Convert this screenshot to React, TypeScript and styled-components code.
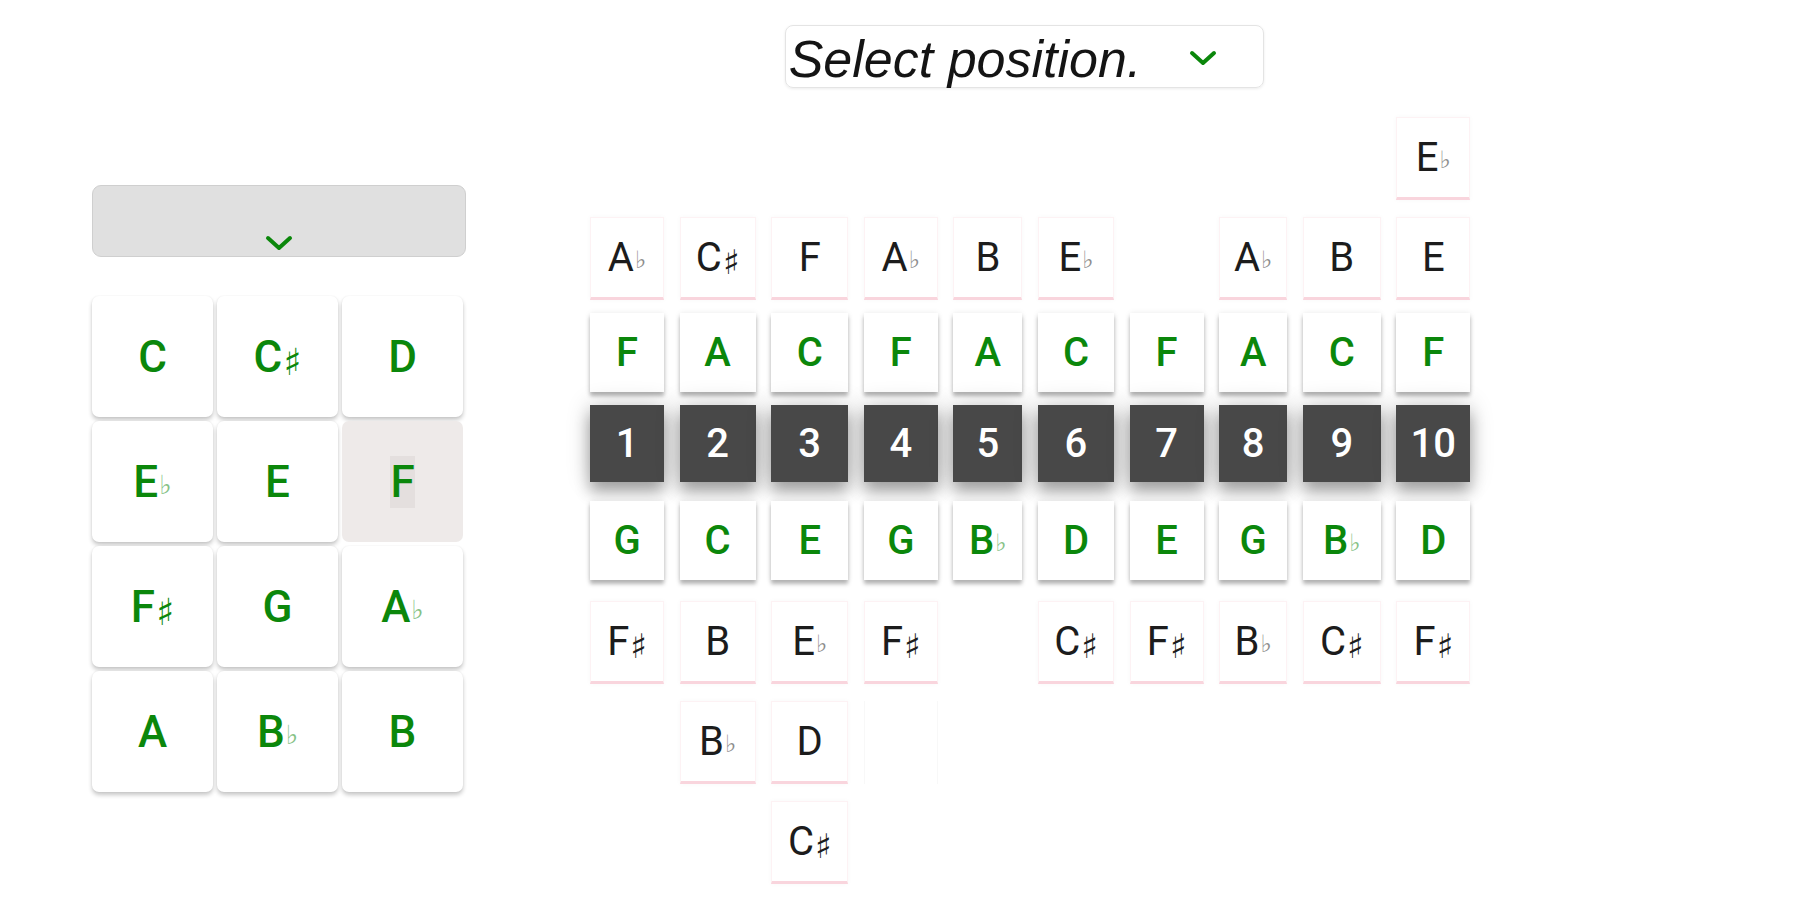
import React from "react";
import styled, { createGlobalStyle, css } from "styled-components";

const GlobalStyle = createGlobalStyle`
  body {
    margin: 0;
    background: #fff;
    font-family: Roboto, "Liberation Sans", sans-serif;
  }
`;

const GREEN = "#0b870b";

const Page = styled.div`
  display: flex;
  align-items: flex-start;
  width: 1800px;
  height: 900px;
  overflow: hidden;
`;

const KeyPanel = styled.div`
  display: flex;
  flex-direction: column;
  gap: 39px;
  width: 374px;
  margin: 185px 0 0 92px;
`;

const KeySelect = styled.div`
  box-sizing: border-box;
  height: 72px;
  width: 374px;
  background: #e0e0e0;
  border: 1px solid #cfcfcf;
  border-radius: 9px;
  display: flex;
  justify-content: center;
  align-items: flex-end;
  padding-bottom: 4px;
`;

const KeyGrid = styled.div`
  display: grid;
  grid-template-columns: repeat(3, 121px);
  grid-auto-rows: 121px;
  gap: 4px;
`;

const KeyTile = styled.div<{ $active?: boolean }>`
  display: flex;
  align-items: center;
  justify-content: center;
  border-radius: 7px;
  background: ${(p) => (p.$active ? "#eeeae9" : "#fff")};
  box-shadow: ${(p) =>
    p.$active ? "none" : "0 3px 4px rgba(0, 0, 0, 0.22), 0 0 2px rgba(0, 0, 0, 0.06)"};
  color: ${GREEN};
  font-size: 44px;
  font-weight: 500;
`;

const Hilite = styled.span`
  background: #e4dfde;
`;

const ChartPanel = styled.div`
  display: flex;
  flex-direction: column;
  align-items: center;
  margin: 25px 0 0 124px;
`;

const PositionSelect = styled.div`
  box-sizing: border-box;
  width: 479px;
  height: 63px;
  margin-left: -12px;
  border: 1px solid #e4e4e4;
  border-radius: 8px;
  box-shadow: 0 1px 3px rgba(0, 0, 0, 0.08);
  display: flex;
  align-items: center;
  justify-content: space-between;
  padding: 4px 46px 0 3px;
  font-family: "Liberation Sans", Arial, sans-serif;
  font-style: italic;
  font-size: 52px;
  color: #141414;
  white-space: nowrap;
`;

const Chart = styled.div`
  display: grid;
  grid-template-columns: 74px 76px 77px 74px 69px 76px 74px 68px 78px 74px;
  grid-template-rows: 100px 96px 92px 96px 100px 100px 100px 85px;
  column-gap: 15.6px;
  margin-top: 29px;
`;

const tileBase = css`
  box-sizing: border-box;
  display: flex;
  align-items: center;
  justify-content: center;
  align-self: start;
  font-size: 40px;
`;

const NoteTile = styled.div`
  ${tileBase};
  height: 83px;
  background: #fff;
  border: 1px solid #fdf2f4;
  border-bottom: 3px solid #f9d5dd;
  color: #1c1c1c;
  box-shadow: 0 0 5px rgba(0, 0, 0, 0.03);
`;

const OpenTile = styled.div`
  ${tileBase};
  height: 79px;
  background: #fff;
  color: ${GREEN};
  font-weight: 500;
  box-shadow: 0 4px 4px rgba(0, 0, 0, 0.28), 0 0 6px rgba(0, 0, 0, 0.08);
`;

const PosTile = styled.div`
  ${tileBase};
  height: 77px;
  background: #484848;
  color: #fff;
  font-weight: 500;
  box-shadow: 0 10px 14px rgba(0, 0, 0, 0.3), 0 0 24px rgba(0, 0, 0, 0.2);
`;

const GhostTile = styled.div`
  height: 83px;
  border-left: 1px solid #f8f8f8;
  border-right: 1px solid #f8f8f8;
`;

const Accidental = styled.span<{ $flat?: boolean }>`
  font-family: "DejaVu Sans", sans-serif;
  font-weight: 400;
  font-size: ${(p) => (p.$flat ? "0.6em" : "0.85em")};
  position: relative;
  top: ${(p) => (p.$flat ? "0.1em" : "0.14em")};
  opacity: ${(p) => (p.$flat ? 0.5 : 1)};
  margin-left: 1px;
`;

function Chevron() {
  return (
    <svg width="28" height="17" viewBox="0 0 28 17" fill="none">
      <path d="M3 3 L14 13 L25 3" stroke={GREEN} strokeWidth="4" strokeLinecap="round" strokeLinejoin="round" />
    </svg>
  );
}

function Note({ name }: { name: string }) {
  const letter = name[0];
  const acc = name.slice(1);
  return (
    <>
      {letter}
      {acc === "#" && <Accidental>♯</Accidental>}
      {acc === "b" && <Accidental $flat>♭</Accidental>}
    </>
  );
}

const keys = ["C", "C#", "D", "Eb", "E", "F", "F#", "G", "Ab", "A", "Bb", "B"];

type Cell = string | number | null;

// rows: two above, open above, position, open below, three below
const columns: Cell[][] = [
  [null, "Ab", "F", 1, "G", "F#", null, null],
  [null, "C#", "A", 2, "C", "B", "Bb", null],
  [null, "F", "C", 3, "E", "Eb", "D", "C#"],
  [null, "Ab", "F", 4, "G", "F#", "ghost", null],
  [null, "B", "A", 5, "Bb", null, null, null],
  [null, "Eb", "C", 6, "D", "C#", null, null],
  [null, null, "F", 7, "E", "F#", null, null],
  [null, "Ab", "A", 8, "G", "Bb", null, null],
  [null, "B", "C", 9, "Bb", "C#", null, null],
  ["Eb", "E", "F", 10, "D", "F#", null, null],
];

function ChartCell({ cell, row, col }: { cell: Cell; row: number; col: number }) {
  const place = { gridRow: row + 1, gridColumn: col + 1 };
  if (cell === null) return null;
  if (cell === "ghost") return <GhostTile style={place} />;
  if (typeof cell === "number") return <PosTile style={place}>{cell}</PosTile>;
  if (row === 2 || row === 4)
    return (
      <OpenTile style={place}>
        <Note name={cell} />
      </OpenTile>
    );
  return (
    <NoteTile style={place}>
      <Note name={cell} />
    </NoteTile>
  );
}

export default function App() {
  return (
    <>
      <GlobalStyle />
      <Page>
        <KeyPanel>
          <KeySelect>
            <Chevron />
          </KeySelect>
          <KeyGrid>
            {keys.map((k) => (
              <KeyTile key={k} $active={k === "F"}>
                {k === "F" ? (
                  <Hilite>
                    <Note name={k} />
                  </Hilite>
                ) : (
                  <Note name={k} />
                )}
              </KeyTile>
            ))}
          </KeyGrid>
        </KeyPanel>
        <ChartPanel>
          <PositionSelect>
            <span>Select position.</span>
            <Chevron />
          </PositionSelect>
          <Chart>
            {columns.map((col, c) =>
              col.map((cell, r) => <ChartCell key={`${c}-${r}`} cell={cell} row={r} col={c} />)
            )}
          </Chart>
        </ChartPanel>
      </Page>
    </>
  );
}
